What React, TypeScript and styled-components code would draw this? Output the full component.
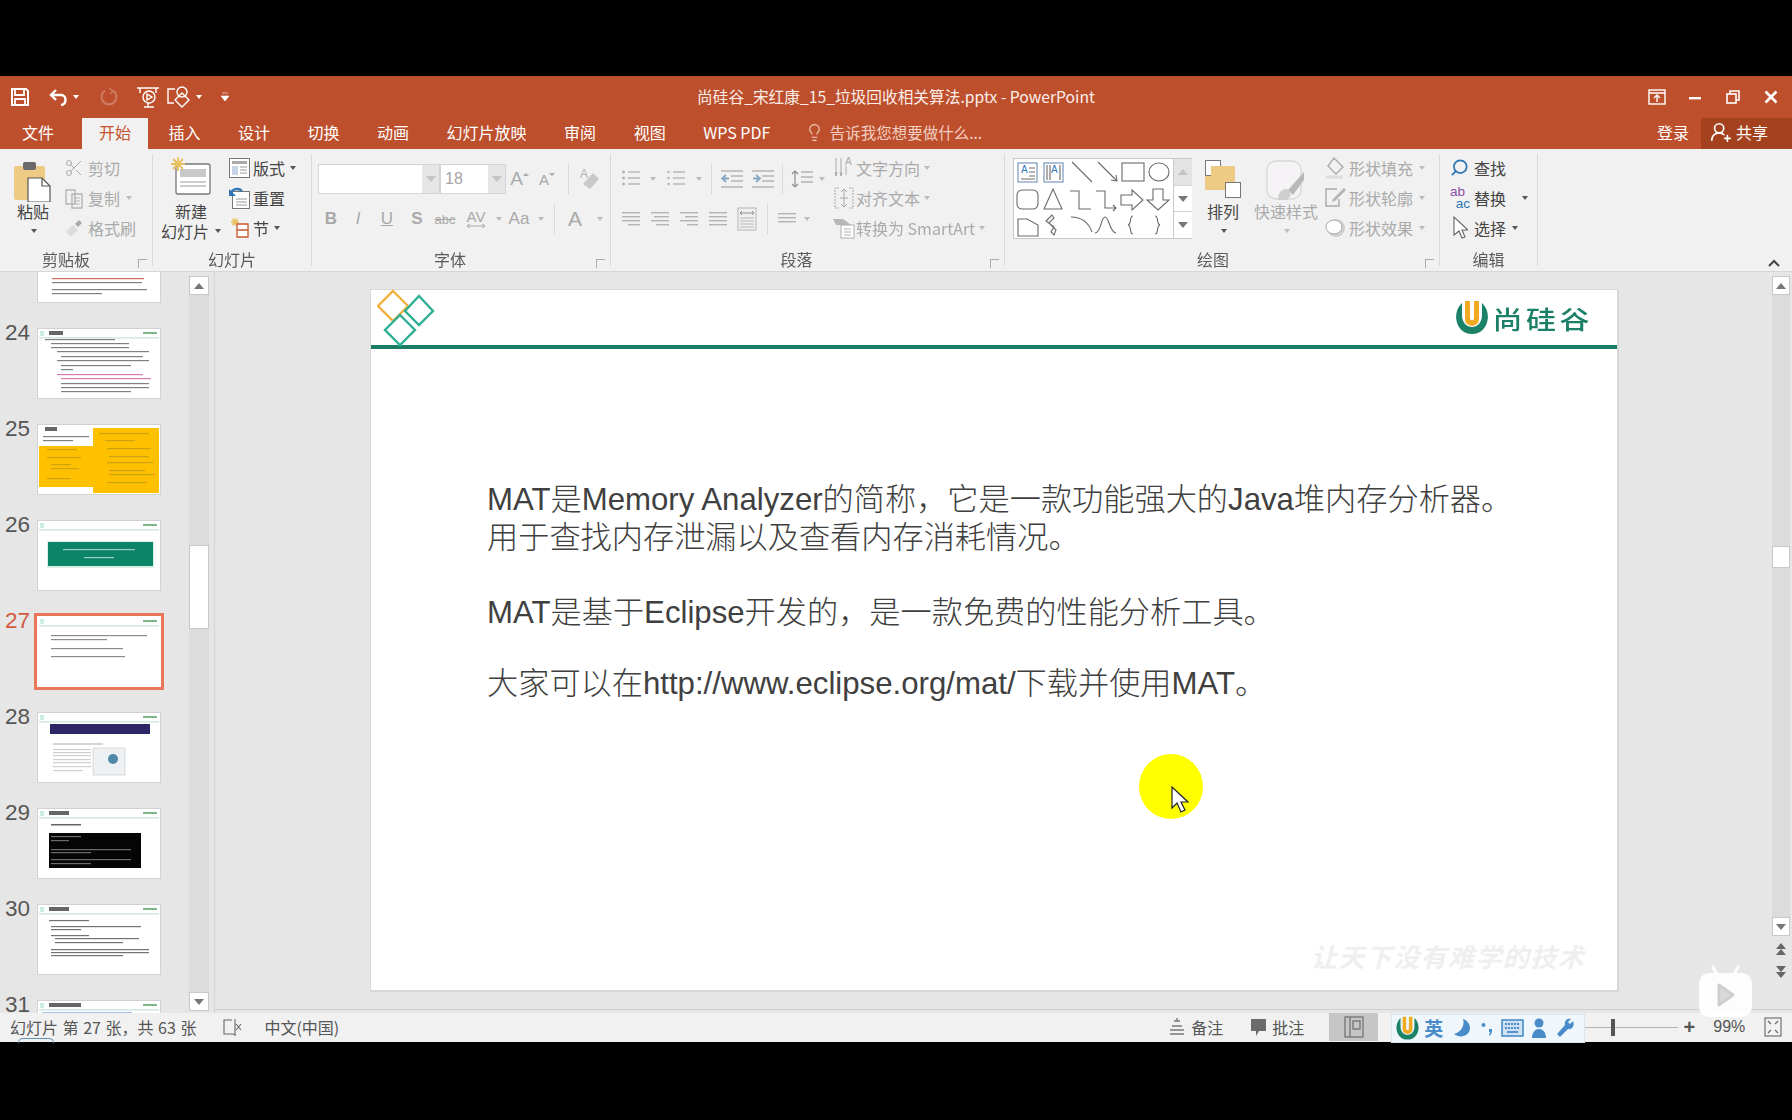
import styled, { createGlobalStyle } from "styled-components";
import { Lightbulb, Scissors, Search, UserRoundPlus } from "lucide-react";
import type { ReactNode } from "react";

const GlobalStyle = createGlobalStyle`
  html, body { margin: 0; padding: 0; background: #000; }
  * { box-sizing: border-box; }
  body { font-family: "Noto Sans", "Noto Sans CJK SC", sans-serif; }
`;

const Page = styled.div`
  width: 1792px;
  height: 1120px;
  padding-top: 76px;
  background: #000;
  overflow: hidden;
`;

const Win = styled.div`
  position: relative;
  width: 1792px;
  height: 966px;
  display: flex;
  flex-direction: column;
  background: #e6e6e6;
  font-family: "Noto Sans CJK SC", "Noto Sans", sans-serif;
  filter: blur(0.45px);
`;

/* title bar */
const TitleBar = styled.div`
  height: 42px;
  flex: none;
  display: grid;
  grid-template-columns: 1fr auto 1fr;
  align-items: center;
  background: #bd4f2d;
  color: #fff;
`;

const Qat = styled.div`
  display: flex;
  align-items: center;
  padding-left: 10px;
  height: 100%;
`;

const QatBtn = styled.div<{ $w: number; $ml?: number }>`
  width: ${(p) => p.$w}px;
  margin-left: ${(p) => p.$ml ?? 0}px;
  display: flex;
  justify-content: center;
  align-items: center;
`;

const DocTitle = styled.div`
  font-size: 15.7px;
  color: #fbeee9;
  padding-bottom: 2px;
`;

const WinBtns = styled.div`
  display: flex;
  justify-content: flex-end;
  align-items: center;
  gap: 20px;
  padding-right: 12px;
`;

const WinBtn = styled.div`
  width: 18px;
  display: flex;
  justify-content: center;
`;

/* tabs */
const TabBar = styled.div`
  height: 31px;
  flex: none;
  display: flex;
  align-items: stretch;
  gap: 3.5px;
  padding-left: 5px;
  background: #bd4f2d;
`;

const Tab = styled.div<{ $active?: boolean; $mr?: number }>`
  display: flex;
  align-items: center;
  padding: 0 17px 3px;
  font-size: 16px;
  margin-right: ${(p) => p.$mr ?? 0}px;
  background: ${(p) => (p.$active ? "#f1f1f1" : "transparent")};
  color: ${(p) => (p.$active ? "#c5532f" : "#fff")};
`;

const TellMe = styled.div`
  display: flex;
  align-items: center;
  gap: 6px;
  margin-left: 14px;
  padding-bottom: 3px;
  font-size: 15.5px;
  color: #f2cfc2;
`;

const TabSpacer = styled.div`
  flex: 1;
`;

const Login = styled.div`
  display: flex;
  align-items: center;
  padding-bottom: 3px;
  font-size: 16px;
  color: #fff;
  margin-right: 12px;
`;

const Share = styled.div`
  width: 91px;
  display: flex;
  align-items: center;
  gap: 4px;
  padding: 0 0 3px 9px;
  margin-left: -3.5px;
  font-size: 16px;
  color: #fff;
  background: #a4421f;
`;

/* ribbon */
const Ribbon = styled.div`
  height: 123px;
  flex: none;
  display: flex;
  padding-top: 5px;
  background: #f1f1f1;
  border-bottom: 1px solid #d6d6d6;
  color: #444;
  font-size: 16px;
`;

const Group = styled.div<{ $w: number }>`
  position: relative;
  width: ${(p) => p.$w}px;
  height: 112px;
  flex: none;
  border-right: 1px solid #dadada;
`;

const GroupBody = styled.div<{ $pl?: number; $gap?: number }>`
  height: 94px;
  display: flex;
  align-items: flex-start;
  padding-left: ${(p) => p.$pl ?? 0}px;
  gap: ${(p) => p.$gap ?? 0}px;
`;

const GroupLabel = styled.div<{ $shift?: number }>`
  height: 22px;
  line-height: 22px;
  text-align: center;
  font-size: 16px;
  color: #5a5a5a;
  transform: translateX(${(p) => p.$shift ?? 0}px);
`;

const Launcher = styled.div`
  position: absolute;
  right: 5px;
  bottom: -2px;
  width: 9px;
  height: 9px;
  border-left: 1px solid #a5a5a5;
  border-top: 1px solid #a5a5a5;
  opacity: 0.9;
`;

const BigBtn = styled.div<{ $w: number; $dim?: boolean; $ml?: number }>`
  width: ${(p) => p.$w}px;
  margin-left: ${(p) => p.$ml ?? 0}px;
  flex: none;
  display: flex;
  flex-direction: column;
  align-items: center;
  color: ${(p) => (p.$dim ? "#aaa" : "#444")};
`;

const BigIcon = styled.div<{ $h?: number }>`
  height: 47px;
  display: flex;
  align-items: flex-start;
  padding-top: ${(p) => p.$h ?? 6}px;
`;

const BigLine = styled.div`
  height: 20px;
  line-height: 20px;
  display: flex;
  align-items: center;
  gap: 4px;
  white-space: nowrap;
`;

const SmallCol = styled.div<{ $w?: number; $ml?: number }>`
  display: flex;
  flex-direction: column;
  width: ${(p) => (p.$w ? `${p.$w}px` : "auto")};
  margin-left: ${(p) => p.$ml ?? 0}px;
  flex: none;
`;

const SmallRow = styled.div<{ $dim?: boolean; $gap?: number }>`
  height: 30px;
  padding-bottom: 3px;
  display: flex;
  align-items: center;
  gap: ${(p) => p.$gap ?? 4}px;
  white-space: nowrap;
  color: ${(p) => (p.$dim ? "#aaa" : "#444")};
`;

const IconBox = styled.div<{ $w?: number }>`
  width: ${(p) => p.$w ?? 20}px;
  height: 22px;
  flex: none;
  display: flex;
  align-items: center;
  justify-content: center;
`;

const Caret = styled.span<{ $dim?: boolean; $ml?: number }>`
  display: inline-block;
  width: 0;
  height: 0;
  margin-left: ${(p) => p.$ml ?? 2}px;
  border-left: 3.5px solid transparent;
  border-right: 3.5px solid transparent;
  border-top: 4px solid ${(p) => (p.$dim ? "#bbb" : "#555")};
`;

const WhiteCaret = styled(Caret)`
  border-top-color: #fff;
`;

const ToolCol = styled.div<{ $w: number; $ml?: number }>`
  width: ${(p) => p.$w}px;
  margin-left: ${(p) => p.$ml ?? 0}px;
  flex: none;
  padding-top: 10px;
  display: flex;
  flex-direction: column;
  gap: 10px;
`;

const ToolRow = styled.div`
  height: 30px;
  display: flex;
  align-items: center;
`;

const Tool = styled.div<{ $w: number; $ml?: number; $size?: number }>`
  width: ${(p) => p.$w}px;
  margin-left: ${(p) => p.$ml ?? 0}px;
  flex: none;
  display: flex;
  align-items: center;
  justify-content: center;
  color: #a9a9a9;
  font-family: "Liberation Sans", sans-serif;
  font-size: ${(p) => p.$size ?? 16}px;
`;

const AvStack = styled.div`
  display: flex;
  flex-direction: column;
  align-items: center;
  line-height: 13px;
`;

const ToolSep = styled.div<{ $ml: number }>`
  width: 1px;
  height: 30px;
  margin-left: ${(p) => p.$ml}px;
  background: #d9d9d9;
  flex: none;
`;

const Combo = styled.div<{ $w: number }>`
  width: ${(p) => p.$w}px;
  height: 30px;
  flex: none;
  display: flex;
  align-items: center;
  background: #fff;
  border: 1px solid #d4d4d4;
  color: #a5a5a5;
  font-size: 16px;
  font-family: "Liberation Sans", sans-serif;
`;

const ComboText = styled.div`
  flex: 1;
  padding-left: 4px;
`;

const ComboDrop = styled.div`
  width: 17px;
  height: 100%;
  background: #e6e6e6;
  display: flex;
  align-items: center;
  justify-content: center;
`;

const Gallery = styled.div`
  width: 179px;
  height: 81px;
  flex: none;
  margin-top: 4px;
  display: flex;
  border: 1px solid #c9c9c9;
  background: #fff;
`;

const GalleryScroll = styled.div`
  width: 19px;
  flex: none;
  display: flex;
  flex-direction: column;
  border-left: 1px solid #c9c9c9;
`;

const GalleryScrollBtn = styled.div<{ $dim?: boolean }>`
  flex: 1;
  display: flex;
  align-items: center;
  justify-content: center;
  background: ${(p) => (p.$dim ? "#e4e4e4" : "#fff")};
  & + & {
    border-top: 1px solid #d4d4d4;
  }
`;

const Collapse = styled.div`
  margin-left: auto;
  align-self: flex-end;
  padding: 0 12px 4px 0;
  display: flex;
`;

const ReplaceIcon = styled.div`
  width: 21px;
  flex: none;
  font-family: "Liberation Sans", sans-serif;
  font-size: 13.5px;
  line-height: 12px;
  text-align: right;
  color: #2e75b6;
  span {
    display: block;
    color: #8a4fa8;
    padding-right: 5px;
  }
`;

/* work area */
const Work = styled.div`
  flex: 1;
  min-height: 0;
  display: flex;
`;

const Pane = styled.div`
  width: 215px;
  flex: none;
  display: flex;
  border-right: 1px solid #d4d4d4;
  overflow: hidden;
`;

const ThumbList = styled.div`
  width: 189px;
  flex: none;
  margin-top: -40px;
  display: flex;
  flex-direction: column;
  gap: 25px;
`;

const ThumbItem = styled.div`
  display: flex;
  height: 71px;
  flex: none;
`;

const ThumbNum = styled.div<{ $on?: boolean }>`
  width: 37px;
  flex: none;
  padding-left: 5px;
  margin-top: -7px;
  font-family: "Liberation Sans", sans-serif;
  font-size: 22.5px;
  line-height: 24px;
  color: ${(p) => (p.$on ? "#cf5a3a" : "#565656")};
`;

const ThumbFrame = styled.div<{ $on?: boolean }>`
  width: 124px;
  height: 71px;
  flex: none;
  background: #fff;
  box-shadow: ${(p) => (p.$on ? "0 0 0 3px #e8775a" : "none")};
  outline: ${(p) => (p.$on ? "none" : "1px solid #d2d2d2")};
  outline-offset: -1px;
  svg {
    display: block;
    filter: blur(0.6px);
  }
`;

const VScroll = styled.div`
  width: 20px;
  flex: none;
  margin-top: 4px;
  margin-bottom: 2px;
  display: flex;
  flex-direction: column;
  background: #dcdcdc;
`;

const ScrollBtn = styled.div`
  height: 19px;
  flex: none;
  display: flex;
  align-items: center;
  justify-content: center;
  background: #fff;
  border: 1px solid #c8c8c8;
`;

const ScrollThumb = styled.div<{ $top: number; $h: number }>`
  height: ${(p) => p.$h}px;
  margin-top: ${(p) => p.$top}px;
  flex: none;
  background: #fff;
  border: 1px solid #c8c8c8;
`;

const ScrollGap = styled.div`
  flex: 1;
`;

const Canvas = styled.div`
  flex: 1;
  min-width: 0;
  display: flex;
  margin-bottom: 3px;
  padding-top: 17px;
  padding-left: 155px;
  border-bottom: 1px solid #cfcfcf;
`;

const Slide = styled.div`
  position: relative;
  width: 1249px;
  height: 703px;
  flex: none;
  background: #fff;
  border: 1px solid #d8d8d8;
  border-right: 2px solid #d8d8d8;
  border-bottom: 2px solid #d8d8d8;
`;

const SlideHead = styled.div`
  height: 59px;
  display: flex;
  justify-content: space-between;
  align-items: center;
  border-bottom: 4px solid #1a7d66;
  padding: 0 24px 0 6px;
`;

const LogoMark = styled.div`
  display: flex;
  align-items: center;
  gap: 3px;
`;

const LogoText = styled.div`
  font-size: 30px;
  font-weight: 500;
  letter-spacing: 3.5px;
  color: #1c7f68;
  transform: scaleY(0.85);
`;

const SlideBody = styled.div`
  padding: 132px 0 0 116px;
  font-family: "Liberation Sans", "Noto Sans CJK SC", sans-serif;
  font-size: 31.2px;
  font-weight: 300;
  line-height: 37.5px;
  color: #404040;
`;

const SlidePara = styled.p<{ $mb: number }>`
  margin: 0 0 ${(p) => p.$mb}px;
  white-space: nowrap;
`;

const Watermark = styled.div`
  position: absolute;
  right: 32px;
  bottom: 16px;
  font-size: 26px;
  font-style: italic;
  font-weight: 700;
  letter-spacing: 1.4px;
  color: #efefef;
`;

const Spot = styled.div`
  position: absolute;
  left: 768px;
  top: 464px;
  width: 64px;
  height: 65px;
  border-radius: 50%;
  background: #ffff00;
`;

const Pointer = styled.div`
  position: absolute;
  left: 32px;
  top: 32px;
  display: flex;
`;

const RightRail = styled.div`
  position: absolute;
  right: 2px;
  top: 200px;
  bottom: 33px;
  width: 18px;
  display: flex;
  flex-direction: column;
`;

const RailTrack = styled.div`
  height: 660px;
  flex: none;
  display: flex;
  flex-direction: column;
  background: #dcdcdc;
`;

const RailNav = styled.div`
  display: flex;
  flex-direction: column;
  align-items: center;
  gap: 7px;
  margin-top: 7px;
`;

const PlayBadge = styled.div`
  position: absolute;
  left: 1699px;
  top: 897px;
  width: 53px;
  height: 44px;
  border-radius: 10px;
  background: rgba(255, 255, 255, 0.92);
  display: flex;
  align-items: center;
  justify-content: center;
  &::before,
  &::after {
    content: "";
    position: absolute;
    top: -8px;
    width: 3px;
    height: 10px;
    border-radius: 2px;
    background: rgba(255, 255, 255, 0.9);
  }
  &::before {
    left: 14px;
    transform: rotate(-28deg);
  }
  &::after {
    right: 14px;
    transform: rotate(28deg);
  }
`;

/* status bar */
const Status = styled.div`
  height: 29px;
  flex: none;
  display: flex;
  align-items: center;
  padding-bottom: 1px;
  background: #f1f1f1;
  color: #555;
  font-size: 16px;
  position: relative;
`;

const StatusText = styled.div<{ $ml?: number; $ws?: number }>`
  margin-left: ${(p) => p.$ml ?? 0}px;
  word-spacing: ${(p) => p.$ws ?? 0}px;
  white-space: nowrap;
  flex: none;
  display: flex;
  align-items: center;
`;

const StatusArc = styled.div`
  position: absolute;
  left: 18px;
  bottom: -1px;
  width: 36px;
  height: 5px;
  border: 1.5px solid #5f92b8;
  border-bottom: 0;
  border-radius: 18px 18px 0 0;
`;

const ViewBtn = styled.div`
  width: 49px;
  height: 100%;
  flex: none;
  margin-left: 25px;
  background: #c6c6c6;
  display: flex;
  align-items: center;
  justify-content: center;
`;

const Ime = styled.div`
  width: 194px;
  height: 29px;
  flex: none;
  margin-left: 13px;
  margin-top: 2px;
  display: flex;
  align-items: center;
  padding-left: 3px;
  background: #f0f7fc;
  border: 1px solid #d7e4ee;
  color: #3f86c7;
`;

const ImeChar = styled.div`
  width: 20px;
  margin-left: 4px;
  font-size: 19px;
  font-weight: 700;
  line-height: 22px;
  color: #4a8cc9;
`;

const ImeSlot = styled.div<{ $w: number; $ml: number }>`
  width: ${(p) => p.$w}px;
  margin-left: ${(p) => p.$ml}px;
  flex: none;
  display: flex;
  justify-content: center;
`;

const Zoom = styled.div`
  position: relative;
  width: 93px;
  height: 1px;
  flex: none;
  background: #b5b5b5;
  &::after {
    content: "";
    position: absolute;
    left: 26px;
    top: -8px;
    width: 4px;
    height: 17px;
    background: #555;
  }
`;

const Plus = styled.div`
  width: 22px;
  flex: none;
  text-align: center;
  font-family: "Liberation Sans", sans-serif;
  font-size: 20px;
  font-weight: 700;
  color: #555;
`;

const Pct = styled.div`
  margin-left: 13px;
  font-family: "Liberation Sans", sans-serif;
  font-size: 16px;
  width: 51px;
  flex: none;
  color: #555;
`;

/* icons */
const stroke = { fill: "none", stroke: "currentColor", strokeWidth: 1.4 };

const Svg = ({ w, h, color, children }: { w: number; h: number; color?: string; children: ReactNode }) => (
  <svg width={w} height={h} viewBox={`0 0 ${w} ${h}`} style={{ color, display: "block", flex: "none" }}>
    {children}
  </svg>
);

const SaveIcon = () => (
  <Svg w={20} h={20} color="#fff">
    <path d="M2 2h14l2 2v14H2z" fill="none" stroke="#fff" strokeWidth="2" />
    <path d="M5 2v6h9V2M5 18v-6h10v6" fill="none" stroke="#fff" strokeWidth="1.8" />
  </Svg>
);
const UndoIcon = () => (
  <Svg w={22} h={20} color="#fff">
    <path d="M8 3 3 8l5 5M3 8h10c6 0 6 9 0 10" fill="none" stroke="#fff" strokeWidth="2.4" />
  </Svg>
);
const RedoIcon = () => (
  <Svg w={20} h={20} color="#cf7d62">
    <path d="M14 3.5a7.5 7.5 0 1 1-8 0" {...stroke} strokeWidth={2} />
    <path d="M10 1l4 3-3 3" {...stroke} />
  </Svg>
);
const PresentIcon = () => (
  <Svg w={24} h={24} color="#fff">
    <path d="M1 3h22M4 3v5M20 3v5" {...stroke} />
    <circle cx="13" cy="12" r="6" {...stroke} />
    <path d="M11 9l5 3-5 3z" {...stroke} />
    <path d="M8 22h10M12 18v4" {...stroke} />
  </Svg>
);
const TouchIcon = () => (
  <Svg w={26} h={24} color="#fff">
    <path d="M9 4H2v14h6" {...stroke} />
    <path d="M16 8l7 7-7 7-7-7z" {...stroke} />
    <circle cx="16" cy="7" r="5" {...stroke} />
  </Svg>
);
const RibbonDisplayIcon = () => (
  <Svg w={18} h={16} color="#fff">
    <rect x="1" y="1" width="16" height="14" {...stroke} />
    <path d="M1 4h16M9 13V7M6 9l3-3 3 3" {...stroke} />
  </Svg>
);
const MinIcon = () => (
  <Svg w={14} h={14}>
    <rect x="1" y="7" width="12" height="2.4" fill="#fff" />
  </Svg>
);
const RestoreIcon = () => (
  <Svg w={14} h={14} color="#fff">
    <rect x="1" y="4" width="9" height="9" {...stroke} strokeWidth={1.6} />
    <path d="M4 4V1h9v9h-3" {...stroke} strokeWidth={1.6} />
  </Svg>
);
const CloseIcon = () => (
  <Svg w={14} h={14}>
    <path d="M1.5 1.5l11 11M12.5 1.5l-11 11" stroke="#fff" strokeWidth="2.6" />
  </Svg>
);
const PasteIcon = () => (
  <Svg w={38} h={42}>
    <rect x="0" y="6" width="31" height="34" rx="2" fill="#eecb85" />
    <rect x="9" y="2" width="13" height="8" rx="2" fill="#6b6b6b" />
    <path d="M14 18h14l8 8v16H14z" fill="#fff" stroke="#555" strokeWidth="1.2" />
    <path d="M28 18v8h8" fill="none" stroke="#555" strokeWidth="1.2" />
  </Svg>
);
const CopyIcon = () => (
  <Svg w={20} h={22} color="#b5b5b5">
    <path d="M2 3h9v14H2zM8 7h10v14H8z" {...stroke} fill="#f1f1f1" />
    <path d="M10 11h6M10 14h6M10 17h6" {...stroke} strokeWidth={1} />
  </Svg>
);
const BrushIcon = () => (
  <Svg w={20} h={20} color="#bbb">
    <path d="M2 14l7-7 5 5-7 7z" fill="#ddd" />
    <path d="M11 6l4-4 3 3-4 4z" fill="#aaa" />
  </Svg>
);
const NewSlideIcon = () => (
  <Svg w={40} h={38}>
    <rect x="5" y="7" width="34" height="30" rx="2" fill="#fff" stroke="#777" strokeWidth="1.3" />
    <rect x="9" y="12" width="26" height="8" fill="#c9c9c9" />
    <path d="M9 25h26M9 29h26" stroke="#999" strokeWidth="1" />
    <g stroke="#e9bf5f" strokeWidth="1.8">
      <path d="M7 0v14M0 7h14M2 2l10 10M12 2 2 12" />
    </g>
  </Svg>
);
const LayoutIcon = () => (
  <Svg w={21} h={22}>
    <rect x="0.5" y="1.5" width="20" height="19" fill="#fff" stroke="#777" />
    <rect x="3" y="4" width="15" height="3" fill="#aaa" />
    <rect x="3" y="9" width="6" height="9" fill="#c5d5e6" />
    <path d="M11 10h7M11 13h7M11 16h7" stroke="#999" />
  </Svg>
);
const ResetIcon = () => (
  <Svg w={21} h={22}>
    <rect x="3.5" y="4.5" width="17" height="17" fill="#fff" stroke="#777" />
    <path d="M7 12h11M7 15h11M7 18h11" stroke="#999" />
    <path d="M1 7c3-6 9-6 12-3" fill="none" stroke="#2e75b6" strokeWidth="2.4" />
    <path d="M0 2v7h7z" fill="#2e75b6" />
  </Svg>
);
const SectionIcon = () => (
  <Svg w={21} h={22}>
    <path d="M6 1v8M2 5h8M3 2l6 6M9 2 3 8" stroke="#e9bf5f" strokeWidth="1.3" />
    <path d="M8 7h11v6H8zM8 13h11v7H8z" fill="#fff" stroke="#c9572f" strokeWidth="1.3" />
  </Svg>
);
const AUp = ({ small }: { small?: boolean }) => (
  <Tool $w={small ? 27 : 28} $size={small ? 15 : 19}>
    A
    <Svg w={7} h={14}>
      <path d={small ? "M0 1h6L3 4z" : "M0 4h6L3 1z"} fill="#aaa" />
    </Svg>
  </Tool>
);
const EraserIcon = () => (
  <Svg w={22} h={24}>
    <text x="1" y="11" fontSize="12" fill="#b5b5b5" fontFamily="Liberation Sans">A</text>
    <path d="M4 17 14 6l6 6-9 10z" fill="#c9c9c9" />
  </Svg>
);
const Lines = ({ rows, w = 18, left = 0 }: { rows: [number, number][]; w?: number; left?: number }) => (
  <Svg w={w + left} h={18} color="#b4b4b4">
    {rows.map(([y, x], i) => (
      <rect key={i} x={left + x} y={y} width={w - x} height={1.4} fill="currentColor" />
    ))}
  </Svg>
);
const BulletIcon = ({ num }: { num?: boolean }) => (
  <Svg w={20} h={20} color="#b4b4b4">
    {[3, 9, 15].map((y) => (
      <g key={y}>
        <circle cx="2.5" cy={y} r={num ? 1.2 : 1.5} fill="currentColor" />
        <rect x="7" y={y - 0.7} width="12" height="1.4" fill="currentColor" />
      </g>
    ))}
  </Svg>
);
const IndentIcon = ({ flip }: { flip?: boolean }) => (
  <Svg w={22} h={20} color="#b4b4b4">
    <path d="M0 2h22M10 7h12M10 12h12M0 18h22" stroke="currentColor" strokeWidth="1.4" />
    <path d={flip ? "M1 9.500h6M4 6l4 3.500L4 13" : "M8 9.500H2M5 6 1 9.500 5 13"} fill="none" stroke="#8aa8c4" strokeWidth="1.8" />
  </Svg>
);
const SpacingIcon = () => (
  <Svg w={22} h={22} color="#b4b4b4">
    <path d="M10 4h12M10 9h12M10 14h12" stroke="currentColor" strokeWidth="1.4" />
    <path d="M4 3v16M1 6l3-3 3 3M1 16l3 3 3-3" fill="none" stroke="#8d8d8d" strokeWidth="1.2" />
  </Svg>
);
const DistIcon = () => (
  <Svg w={20} h={24} color="#b4b4b4">
    <rect x="1" y="1" width="18" height="22" {...stroke} strokeWidth={1} />
    <path d="M3 11h14M3 14h14M3 17h14M3 20h14" stroke="currentColor" />
    <path d="M3 6h14M5 4 3 6l2 2M15 4l2 2-2 2" fill="none" stroke="#8d8d8d" />
  </Svg>
);
const TextDirIcon = () => (
  <Svg w={20} h={24} color="#a9a9a9">
    <path d="M2 2v17M7 2v17M12 10v9M1 16l1 4 1-4M6 16l1 4 1-4" {...stroke} strokeWidth={1} />
    <text x="11" y="9" fontSize="10" fill="#a9a9a9" fontFamily="Liberation Sans">A</text>
  </Svg>
);
const AlignTextIcon = () => (
  <Svg w={20} h={24} color="#a9a9a9">
    <path d="M5 2H1v20h4M15 2h4v20h-4" {...stroke} strokeWidth={1} strokeDasharray="2 1" />
    <path d="M10 3v18M7 6l3-3 3 3M7 18l3 3 3-3M6 12h8" {...stroke} strokeWidth={1} />
  </Svg>
);
const SmartArtIcon = () => (
  <Svg w={22} h={24} color="#a9a9a9">
    <path d="M0 3h10l8 6H3z" fill="#b7b7b7" />
    <rect x="8" y="9" width="13" height="13" fill="#fff" stroke="#b0b0b0" />
    <path d="M11 13h7M11 16h7M11 19h7" stroke="#b0b0b0" />
  </Svg>
);
const ShapesGrid = () => (
  <Svg w={159} h={79} color="#6a6a6a">
    <g {...stroke} strokeWidth={1.1}>
      <rect x="4" y="4" width="19" height="19" stroke="#6d8fb2" />
      <path d="M15 9h6M15 13h6M15 17h6M7 20h14" />
      <rect x="30" y="4" width="19" height="19" stroke="#6d8fb2" />
      <path d="M33 6v15M36 6v15M46 6v15" />
      <path d="M58 3l20 20M84 3l19 19" />
      <path d="M103 22l-1-6M103 22l-6-1" />
      <rect x="108" y="4" width="22" height="18" />
      <ellipse cx="145" cy="13" rx="10" ry="9" />
      <rect x="3" y="31" width="21" height="19" rx="5" />
      <path d="M30 50h18l-9-20z" />
      <path d="M56 32h9v18h12M82 32h9v17h11M99 46l3 3-3 3" />
      <path d="M107 36h11v-5l11 10-11 10v-5h-11z" />
      <path d="M139 30h10v11h6l-11 10-11-10h6z" />
      <path d="M4 60h9l11 6v11H4z" />
      <path d="M38 56l-6 6 8 6-3 5 3 3 2-5-7-7 5-5z" />
      <path d="M57 58c10 0 17 4 21 15" />
      <path d="M81 74c6 0 6-16 10-16s5 16 11 16" />
      <path d="M119 57c-4 0-1 8-5 9 4 1 1 9 5 9" />
      <path d="M141 57c4 0 1 8 5 9-4 1-1 9-5 9" />
    </g>
    <text x="7" y="14" fontSize="10" fill="#2e75b6" fontFamily="Liberation Sans">A</text>
    <text x="37" y="14" fontSize="10" fill="#2e75b6" fontFamily="Liberation Sans">A</text>
  </Svg>
);
const ArrangeIcon = () => (
  <Svg w={36} h={38}>
    <rect x="0.500" y="0.500" width="15" height="15" fill="#fff" stroke="#777" />
    <rect x="6" y="6" width="24" height="24" fill="#eecb85" />
    <rect x="0" y="16" width="10" height="14" fill="#eecb85" />
    <rect x="20.500" y="22.500" width="15" height="15" fill="#fff" stroke="#777" />
  </Svg>
);
const QuickStyleIcon = () => (
  <Svg w={40} h={42}>
    <rect x="1" y="1" width="34" height="38" rx="9" fill="#f5f3f5" stroke="#d9d9d9" strokeWidth="1.4" />
    <path d="M38 12 22 30l5 5L38 20z" fill="#b9b9b9" />
    <path d="M12 40c0-9 6-13 11-10 3 3 2 9-4 10z" fill="#cfcfcf" />
  </Svg>
);
const FillIcon = () => (
  <Svg w={22} h={24} color="#aaa">
    <path d="M10 2l9 9-7 7-8-8z" {...stroke} />
    <path d="M2 21h17" stroke="#ddd" strokeWidth="3" />
  </Svg>
);
const OutlineIcon = () => (
  <Svg w={22} h={24} color="#aaa">
    <path d="M13 3H2v17h13v-7" {...stroke} />
    <path d="M20 2 9 13l-1 3 3-1L22 4z" fill="#b5b5b5" />
  </Svg>
);
const EffectIcon = () => (
  <Svg w={22} h={22}>
    <circle cx="12" cy="11" r="9" fill="#d0d0d0" />
    <ellipse cx="10" cy="10" rx="8" ry="7" fill="#fff" stroke="#a9a9a9" />
  </Svg>
);
const SelectIcon = () => (
  <Svg w={16} h={24} color="#666">
    <path d="M2 1v18l5-4 3 7 3-1-3-7h6z" fill="#fff" stroke="#666" strokeWidth="1.1" />
  </Svg>
);
const ChevronUp = () => (
  <Svg w={12} h={8}>
    <path d="M1 7l5-5 5 5" fill="none" stroke="#444" strokeWidth="2" />
  </Svg>
);
const TriUp = ({ color = "#777" }: { color?: string }) => (
  <Svg w={10} h={6}>
    <path d="M0 6h10L5 0z" fill={color} />
  </Svg>
);
const TriDown = ({ color = "#777" }: { color?: string }) => (
  <Svg w={10} h={6}>
    <path d="M0 0h10L5 6z" fill={color} />
  </Svg>
);
const USign = ({ size }: { size: number }) => (
  <svg width={size} height={size} viewBox="0 0 36 36" style={{ display: "block", flex: "none" }}>
    <path d="M8 3C-3 13 2 34 18 34S39 13 28 3v12c0 16-20 16-20 0z" fill="#1b8268" />
    <path d="M11 1h5v17c0 3 4 3 4 0V1h5v18c0 9-14 9-14 0z" fill="#efaa22" />
  </svg>
);
const DiamondLogo = () => (
  <Svg w={62} h={58}>
    <g fill="none" strokeWidth="2.400">
      <path d="M16 5 31 20 16 35 1 20z" stroke="#f2b13f" transform="translate(0 -3)" />
      <path d="M42 7 56 22 42 36 28 22z" stroke="#2fb094" />
      <path d="M23 26l15 15-15 15L8 41z" stroke="#2fb094" />
    </g>
  </Svg>
);
const CursorIcon = () => (
  <Svg w={18} h={28}>
    <path d="M1 1v21l5-5 4 9 4-2-4-8h7z" fill="#fff" stroke="#222" strokeWidth="1.200" />
  </Svg>
);
const DoubleArrow = ({ up }: { up?: boolean }) => (
  <Svg w={12} h={14}>
    <path d={up ? "M6 0l5 6H1zM6 6l5 6H1z" : "M1 2h10L6 8zM1 8h10l-5 6z"} fill="#666" />
  </Svg>
);
const NotesIcon = () => (
  <Svg w={16} h={20} color="#777">
    <path d="M8 1v3M5 4h6M3 9h10M1 13h14M1 17h14" {...stroke} />
  </Svg>
);
const CommentIcon = () => (
  <Svg w={17} h={20}>
    <path d="M1 2h15v12H9l-3 5v-5H1z" fill="#6b6b6b" />
  </Svg>
);
const SpellIcon = () => (
  <Svg w={19} h={20} color="#666">
    <path d="M9 3H1v14h8c2 0 3 1 3 1V2" {...stroke} strokeWidth={1.1} />
    <path d="M13 7l5 6M18 7l-5 6" {...stroke} strokeWidth={1.1} />
  </Svg>
);
const NormalViewIcon = () => (
  <Svg w={20} h={22} color="#7a7a7a">
    <rect x="1" y="1" width="18" height="20" {...stroke} />
    <path d="M6 1v20M9 5h7v8H9z" {...stroke} />
  </Svg>
);
const FitIcon = () => (
  <Svg w={18} h={20} color="#666">
    <rect x="1" y="1" width="16" height="18" {...stroke} strokeWidth={1.1} />
    <path d="M4 4l3 3M14 4l-3 3M4 16l3-3M14 16l-3-3" {...stroke} strokeWidth={1.1} />
  </Svg>
);
const Moon = () => (
  <Svg w={18} h={20}>
    <path d="M10 1c2 7-2 13-9 15 6 5 16 2 16-6 0-4-3-8-7-9z" fill="#4a8cc9" />
  </Svg>
);
const Punct = () => (
  <Svg w={12} h={20}>
    <circle cx="2.500" cy="7" r="2" fill="#4a8cc9" />
    <path d="M8 11h3v3l-2 4-1-1 1-3H8z" fill="#4a8cc9" />
  </Svg>
);
const Keyboard = () => (
  <Svg w={23} h={18}>
    <rect x="1" y="1" width="21" height="16" fill="#cfe2f3" stroke="#4a8cc9" strokeWidth="1.600" />
    <path d="M4 5h15M4 9h15" stroke="#4a8cc9" strokeWidth="1.800" strokeDasharray="2 1" />
    <path d="M6 13h11" stroke="#4a8cc9" strokeWidth="1.800" />
  </Svg>
);
const Person = () => (
  <Svg w={14} h={20}>
    <circle cx="7" cy="5" r="4.500" fill="#4a8cc9" />
    <path d="M0 20c0-12 14-12 14 0z" fill="#4a8cc9" />
  </Svg>
);
const Wrench = () => (
  <Svg w={18} h={20}>
    <path d="M17 3l-3 3-2-2 3-3c-4-1-7 2-6 6L1 16l3 3 8-8c4 1 7-3 5-8z" fill="#4a8cc9" />
  </Svg>
);

/* slide thumbnails: each is a tiny picture of the slide */
const textBlock = (rows: [number, number, number][], color = "#555") =>
  rows.map(([x, y, w], i) => <rect key={i} x={x} y={y} width={w} height={1.2} fill={color} opacity={0.75} />);

const ThumbHead = () => (
  <g>
    <rect x="2" y="9.500" width="120" height="0.800" fill="#9fd6c7" />
    <rect x="3" y="3" width="4" height="5" fill="#cdeee3" />
    <rect x="106" y="4" width="14" height="2" fill="#79b98b" />
  </g>
);

const thumbArt: Record<number, ReactNode> = {
  23: (
    <g>
      {textBlock([[15, 46, 92]], "#c0392b")}
      {textBlock([[15, 50, 90], [15, 57, 95], [15, 61, 50]])}
    </g>
  ),
  24: (
    <g>
      <ThumbHead />
      <rect x="12" y="3" width="14" height="4" fill="#666" />
      {textBlock([[8, 11, 70], [14, 15, 78], [14, 19, 78], [20, 23, 92], [24, 28, 82], [20, 32, 92], [24, 37, 70], [24, 41, 12], [24, 55, 88], [24, 59, 88], [24, 63, 70]])}
      {textBlock([[20, 46, 86], [24, 50, 90]], "#c8509a")}
    </g>
  ),
  25: (
    <g>
      <rect x="2" y="22" width="54" height="41" fill="#ffc000" />
      <rect x="56" y="4" width="66" height="65" fill="#ffc000" />
      <rect x="8" y="3" width="12" height="4" fill="#666" />
      {textBlock([[6, 12, 46], [6, 16, 30]])}
      {textBlock([[10, 25, 30], [10, 33, 34], [14, 40, 20], [14, 44, 28], [10, 54, 24], [62, 9, 50], [68, 16, 30], [70, 24, 44], [72, 32, 40], [70, 38, 46], [72, 46, 36], [72, 50, 46], [70, 58, 40]], "#bd9a18")}
    </g>
  ),
  26: (
    <g>
      <ThumbHead />
      <rect x="10" y="21" width="107" height="27" fill="#d9efe7" />
      <rect x="11" y="22" width="105" height="24" fill="#0c8467" />
      {textBlock([[26, 29, 72], [47, 37, 30]], "#cfe7df")}
    </g>
  ),
  27: (
    <g>
      <ThumbHead />
      {textBlock([[14, 19, 96], [14, 23, 56], [14, 32, 72], [14, 40, 74]], "#666")}
    </g>
  ),
  28: (
    <g>
      <ThumbHead />
      <rect x="13" y="12" width="100" height="10" fill="#2c2766" />
      <rect x="16" y="31" width="50" height="2" fill="#d6d6d6" />
      {textBlock([[16, 37, 38], [16, 40, 38], [16, 43, 38], [16, 47, 38], [16, 50, 38], [16, 54, 38], [16, 58, 30]], "#bdbdbd")}
      <rect x="56" y="36" width="32" height="27" fill="#eef1f3" stroke="#bbb" strokeWidth="0.500" />
      <circle cx="76" cy="47" r="5" fill="#4f88a8" />
    </g>
  ),
  29: (
    <g>
      <ThumbHead />
      <rect x="12" y="3" width="20" height="4" fill="#666" />
      <rect x="14" y="16" width="30" height="1.500" fill="#666" />
      <rect x="12" y="25" width="92" height="35" fill="#050505" />
      {textBlock([[14, 28, 30], [14, 32, 18], [14, 41, 80], [14, 44, 40], [14, 51, 80], [14, 55, 40]], "#8d8d8d")}
    </g>
  ),
  30: (
    <g>
      <ThumbHead />
      <rect x="12" y="3" width="20" height="4" fill="#666" />
      {textBlock([[12, 16, 40], [14, 22, 90], [14, 25, 30], [14, 31, 38], [18, 34, 84], [18, 38, 68], [14, 45, 98], [14, 48, 98], [14, 51, 72]], "#444")}
    </g>
  ),
  31: (
    <g>
      <ThumbHead />
      <rect x="12" y="3" width="32" height="4" fill="#666" />
      {textBlock([[5, 12, 90]], "#88a8e0")}
    </g>
  ),
};

const slideNumbers = [23, 24, 25, 26, 27, 28, 29, 30, 31];

const App = () => (
  <Page>
    <GlobalStyle />
    <Win>
      <TitleBar>
        <Qat>
          <SaveIcon />
          <QatBtn $w={22} $ml={18}>
            <UndoIcon />
          </QatBtn>
          <QatBtn $w={10}>
            <WhiteCaret />
          </QatBtn>
          <QatBtn $w={20} $ml={19}>
            <RedoIcon />
          </QatBtn>
          <QatBtn $w={24} $ml={17}>
            <PresentIcon />
          </QatBtn>
          <QatBtn $w={26} $ml={6}>
            <TouchIcon />
          </QatBtn>
          <QatBtn $w={10} $ml={1}>
            <WhiteCaret />
          </QatBtn>
          <QatBtn $w={10} $ml={17}>
            <Svg w={8} h={10}>
              <path d="M1 1h6M0 4h8L4 9z" fill="#fff" stroke="#fff" strokeWidth="0.600" />
            </Svg>
          </QatBtn>
        </Qat>
        <DocTitle>尚硅谷_宋红康_15_垃圾回收相关算法.pptx - PowerPoint</DocTitle>
        <WinBtns>
          <WinBtn>
            <RibbonDisplayIcon />
          </WinBtn>
          <WinBtn>
            <MinIcon />
          </WinBtn>
          <WinBtn>
            <RestoreIcon />
          </WinBtn>
          <WinBtn>
            <CloseIcon />
          </WinBtn>
        </WinBtns>
      </TitleBar>

      <TabBar>
        <Tab $mr={7.5}>文件</Tab>
        <Tab $active>开始</Tab>
        <Tab>插入</Tab>
        <Tab>设计</Tab>
        <Tab>切换</Tab>
        <Tab>动画</Tab>
        <Tab>幻灯片放映</Tab>
        <Tab>审阅</Tab>
        <Tab>视图</Tab>
        <Tab>WPS PDF</Tab>
        <TellMe>
          <Lightbulb size={19} strokeWidth={1.4} />
          告诉我您想要做什么...
        </TellMe>
        <TabSpacer />
        <Login>登录</Login>
        <Share>
          <UserRoundPlus size={22} strokeWidth={1.8} />
          共享
        </Share>
      </TabBar>

      <Ribbon>
        <Group $w={153}>
          <GroupBody $pl={13} $gap={11}>
            <BigBtn $w={40}>
              <BigIcon>
                <PasteIcon />
              </BigIcon>
              <BigLine>粘贴</BigLine>
              <BigLine>
                <Caret />
              </BigLine>
            </BigBtn>
            <SmallCol>
              <SmallRow $dim>
                <IconBox>
                  <Scissors size={20} strokeWidth={1.2} />
                </IconBox>
                剪切
              </SmallRow>
              <SmallRow $dim>
                <IconBox>
                  <CopyIcon />
                </IconBox>
                复制
                <Caret $dim />
              </SmallRow>
              <SmallRow $dim>
                <IconBox>
                  <BrushIcon />
                </IconBox>
                格式刷
              </SmallRow>
            </SmallCol>
          </GroupBody>
          <GroupLabel $shift={-10}>剪贴板</GroupLabel>
          <Launcher />
        </Group>

        <Group $w={159}>
          <GroupBody $pl={7} $gap={7}>
            <BigBtn $w={62}>
              <BigIcon $h={3}>
                <NewSlideIcon />
              </BigIcon>
              <BigLine>新建</BigLine>
              <BigLine>
                幻灯片
                <Caret />
              </BigLine>
            </BigBtn>
            <SmallCol>
              <SmallRow $gap={3}>
                <IconBox $w={21}>
                  <LayoutIcon />
                </IconBox>
                版式
                <Caret />
              </SmallRow>
              <SmallRow $gap={3}>
                <IconBox $w={21}>
                  <ResetIcon />
                </IconBox>
                重置
              </SmallRow>
              <SmallRow $gap={3}>
                <IconBox $w={21}>
                  <SectionIcon />
                </IconBox>
                节
                <Caret />
              </SmallRow>
            </SmallCol>
          </GroupBody>
          <GroupLabel>幻灯片</GroupLabel>
        </Group>

        <Group $w={299}>
          <GroupBody $pl={6}>
            <ToolCol $w={288}>
              <ToolRow>
                <Combo $w={122}>
                  <ComboText />
                  <ComboDrop>
                    <TriDown color="#c4c4c4" />
                  </ComboDrop>
                </Combo>
                <Combo $w={66}>
                  <ComboText>18</ComboText>
                  <ComboDrop>
                    <TriDown color="#c4c4c4" />
                  </ComboDrop>
                </Combo>
                <AUp />
                <AUp small />
                <ToolSep $ml={7} />
                <Tool $w={28} $ml={7}>
                  <EraserIcon />
                </Tool>
              </ToolRow>
              <ToolRow>
                <Tool $w={26} $size={17}>
                  <b>B</b>
                </Tool>
                <Tool $w={28} $size={17}>
                  <i>I</i>
                </Tool>
                <Tool $w={30} $size={17}>
                  <u>U</u>
                </Tool>
                <Tool $w={30} $size={17}>
                  <b>S</b>
                </Tool>
                <Tool $w={26} $size={13}>
                  <s>abc</s>
                </Tool>
                <Tool $w={36} $size={15}>
                  <AvStack>
                    AV
                    <Svg w={20} h={6}>
                      <path d="M1 3h18M4 1 1 3l3 2M16 1l3 2-3 2" fill="none" stroke="#a9a9a9" />
                    </Svg>
                  </AvStack>
                </Tool>
                <Tool $w={8}>
                  <Caret $dim />
                </Tool>
                <Tool $w={34} $size={17}>
                  Aa
                </Tool>
                <Tool $w={8}>
                  <Caret $dim />
                </Tool>
                <ToolSep $ml={10} />
                <Tool $w={40} $size={21}>
                  A
                </Tool>
                <Tool $w={8}>
                  <Caret $dim />
                </Tool>
              </ToolRow>
            </ToolCol>
          </GroupBody>
          <GroupLabel $shift={-11}>字体</GroupLabel>
          <Launcher />
        </Group>

        <Group $w={394}>
          <GroupBody>
            <ToolCol $w={213} $ml={10}>
              <ToolRow>
                <Tool $w={20}>
                  <BulletIcon />
                </Tool>
                <Tool $w={22}>
                  <Caret $dim />
                </Tool>
                <Tool $w={24} $ml={1}>
                  <BulletIcon num />
                </Tool>
                <Tool $w={20}>
                  <Caret $dim />
                </Tool>
                <ToolSep $ml={3} />
                <Tool $w={30} $ml={5}>
                  <IndentIcon />
                </Tool>
                <Tool $w={31}>
                  <IndentIcon flip />
                </Tool>
                <ToolSep $ml={4} />
                <Tool $w={30} $ml={4}>
                  <SpacingIcon />
                </Tool>
                <Tool $w={8}>
                  <Caret $dim />
                </Tool>
              </ToolRow>
              <ToolRow>
                <Tool $w={20}>
                  <Lines rows={[[2, 0], [6, 0], [10, 0], [14, 6]]} />
                </Tool>
                <Tool $w={20} $ml={9}>
                  <Lines rows={[[2, 0], [6, 3], [10, 0], [14, 5]]} />
                </Tool>
                <Tool $w={20} $ml={9}>
                  <Lines rows={[[2, 0], [6, 5], [10, 0], [14, 7]]} />
                </Tool>
                <Tool $w={20} $ml={9}>
                  <Lines rows={[[2, 0], [6, 0], [10, 0], [14, 0]]} />
                </Tool>
                <Tool $w={20} $ml={9}>
                  <DistIcon />
                </Tool>
                <ToolSep $ml={10} />
                <Tool $w={20} $ml={9}>
                  <Lines rows={[[3, 0], [7, 0], [11, 0]]} />
                </Tool>
                <Tool $w={8} $ml={5}>
                  <Caret $dim />
                </Tool>
              </ToolRow>
            </ToolCol>
            <SmallCol>
              <SmallRow $dim $gap={2}>
                <IconBox>
                  <TextDirIcon />
                </IconBox>
                文字方向
                <Caret $dim />
              </SmallRow>
              <SmallRow $dim $gap={2}>
                <IconBox>
                  <AlignTextIcon />
                </IconBox>
                对齐文本
                <Caret $dim />
              </SmallRow>
              <SmallRow $dim $gap={2}>
                <IconBox>
                  <SmartArtIcon />
                </IconBox>
                转换为 SmartArt
                <Caret $dim />
              </SmallRow>
            </SmallCol>
          </GroupBody>
          <GroupLabel $shift={-11}>段落</GroupLabel>
          <Launcher />
        </Group>

        <Group $w={435}>
          <GroupBody $pl={8}>
            <Gallery>
              <ShapesGrid />
              <GalleryScroll>
                <GalleryScrollBtn $dim>
                  <TriUp color="#c4c4c4" />
                </GalleryScrollBtn>
                <GalleryScrollBtn>
                  <TriDown />
                </GalleryScrollBtn>
                <GalleryScrollBtn>
                  <TriDown />
                </GalleryScrollBtn>
              </GalleryScroll>
            </Gallery>
            <BigBtn $w={50} $ml={6}>
              <BigIcon>
                <ArrangeIcon />
              </BigIcon>
              <BigLine>排列</BigLine>
              <BigLine>
                <Caret />
              </BigLine>
            </BigBtn>
            <BigBtn $w={64} $dim $ml={6}>
              <BigIcon $h={6}>
                <QuickStyleIcon />
              </BigIcon>
              <BigLine>快速样式</BigLine>
              <BigLine>
                <Caret $dim />
              </BigLine>
            </BigBtn>
            <SmallCol $w={110} $ml={7}>
              <SmallRow $dim>
                <IconBox>
                  <FillIcon />
                </IconBox>
                形状填充
                <Caret $dim />
              </SmallRow>
              <SmallRow $dim>
                <IconBox>
                  <OutlineIcon />
                </IconBox>
                形状轮廓
                <Caret $dim />
              </SmallRow>
              <SmallRow $dim>
                <IconBox>
                  <EffectIcon />
                </IconBox>
                形状效果
                <Caret $dim />
              </SmallRow>
            </SmallCol>
          </GroupBody>
          <GroupLabel $shift={-9}>绘图</GroupLabel>
          <Launcher />
        </Group>

        <Group $w={98}>
          <GroupBody $pl={9}>
            <SmallCol>
              <SmallRow>
                <IconBox $w={21}>
                  <Search size={19} strokeWidth={2.2} color="#2e75b6" style={{ transform: "scaleX(-1)" }} />
                </IconBox>
                查找
              </SmallRow>
              <SmallRow>
                <ReplaceIcon>
                  <span>ab</span>
                  ac
                </ReplaceIcon>
                替换
                <Caret $ml={12} />
              </SmallRow>
              <SmallRow>
                <IconBox $w={21}>
                  <SelectIcon />
                </IconBox>
                选择
                <Caret />
              </SmallRow>
            </SmallCol>
          </GroupBody>
          <GroupLabel>编辑</GroupLabel>
        </Group>

        <Collapse>
          <ChevronUp />
        </Collapse>
      </Ribbon>

      <Work>
        <Pane>
          <ThumbList>
            {slideNumbers.map((n) => (
              <ThumbItem key={n}>
                <ThumbNum $on={n === 27}>{n === 23 ? "" : n}</ThumbNum>
                <ThumbFrame $on={n === 27}>
                  <svg width="124" height="71" viewBox="0 0 124 71">
                    {thumbArt[n]}
                  </svg>
                </ThumbFrame>
              </ThumbItem>
            ))}
          </ThumbList>
          <VScroll>
            <ScrollBtn>
              <TriUp />
            </ScrollBtn>
            <ScrollThumb $top={250} $h={84} />
            <ScrollGap />
            <ScrollBtn>
              <TriDown />
            </ScrollBtn>
          </VScroll>
        </Pane>

        <Canvas>
          <Slide>
            <SlideHead>
              <DiamondLogo />
              <LogoMark>
                <USign size={36} />
                <LogoText>尚硅谷</LogoText>
              </LogoMark>
            </SlideHead>
            <SlideBody>
              <SlidePara $mb={38.3}>
                MAT是Memory Analyzer的简称，它是一款功能强大的Java堆内存分析器。
                <br />
                用于查找内存泄漏以及查看内存消耗情况。
              </SlidePara>
              <SlidePara $mb={33.7}>MAT是基于Eclipse开发的，是一款免费的性能分析工具。</SlidePara>
              <SlidePara $mb={0}>大家可以在http://www.eclipse.org/mat/下载并使用MAT。</SlidePara>
            </SlideBody>
            <Watermark>让天下没有难学的技术</Watermark>
            <Spot>
              <Pointer>
                <CursorIcon />
              </Pointer>
            </Spot>
          </Slide>
        </Canvas>

        <RightRail>
          <RailTrack>
            <ScrollBtn>
              <TriUp />
            </ScrollBtn>
            <ScrollThumb $top={251} $h={22} />
            <ScrollGap />
            <ScrollBtn>
              <TriDown />
            </ScrollBtn>
          </RailTrack>
          <RailNav>
            <DoubleArrow up />
            <DoubleArrow />
          </RailNav>
        </RightRail>
      </Work>

      <Status>
        <StatusArc />
        <StatusText $ml={10} $ws={1}>幻灯片 第 27 张，共 63 张</StatusText>
        <StatusText $ml={27}>
          <SpellIcon />
        </StatusText>
        <StatusText $ml={22}>中文(中国)</StatusText>
        <StatusText $ml={830}>
          <NotesIcon />
        </StatusText>
        <StatusText $ml={6}>备注</StatusText>
        <StatusText $ml={27}>
          <CommentIcon />
        </StatusText>
        <StatusText $ml={5}>批注</StatusText>
        <ViewBtn>
          <NormalViewIcon />
        </ViewBtn>
        <Ime>
          <USign size={25} />
          <ImeChar>英</ImeChar>
          <ImeSlot $w={18} $ml={9}>
            <Moon />
          </ImeSlot>
          <ImeSlot $w={12} $ml={10}>
            <Punct />
          </ImeSlot>
          <ImeSlot $w={23} $ml={8}>
            <Keyboard />
          </ImeSlot>
          <ImeSlot $w={14} $ml={8}>
            <Person />
          </ImeSlot>
          <ImeSlot $w={18} $ml={10}>
            <Wrench />
          </ImeSlot>
        </Ime>
        <Zoom />
        <Plus>+</Plus>
        <Pct>99%</Pct>
        <StatusText>
          <FitIcon />
        </StatusText>
      </Status>

      <PlayBadge>
        <Svg w={20} h={26}>
          <path d="M3 3l14 10L3 23z" fill="#d9d9d9" stroke="#cfcfcf" strokeWidth="3" strokeLinejoin="round" />
        </Svg>
      </PlayBadge>
    </Win>
  </Page>
);

export default App;
